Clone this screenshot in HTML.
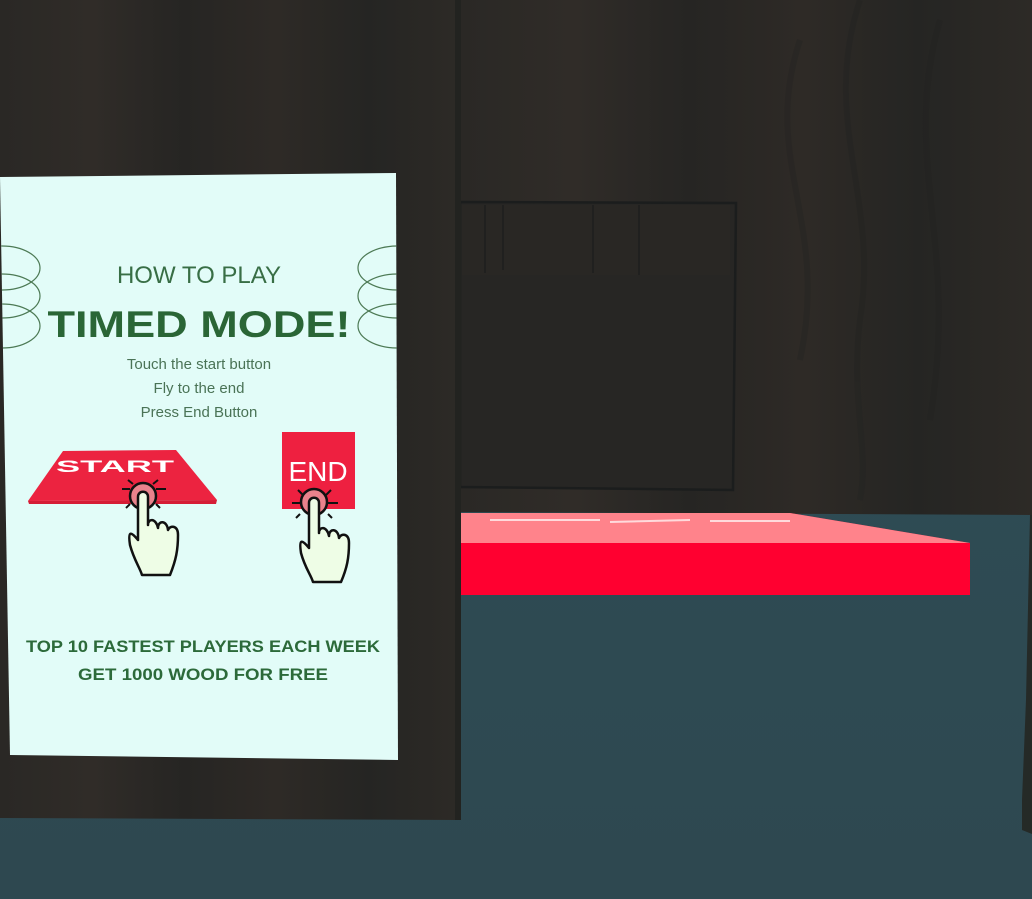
<!DOCTYPE html>
<html><head><meta charset="utf-8"><style>
html,body{margin:0;padding:0;width:1032px;height:899px;overflow:hidden;background:#2f4c55}
svg{display:block}
text{font-family:"Liberation Sans",sans-serif}
</style></head><body>
<svg width="1032" height="899" viewBox="0 0 1032 899" xmlns="http://www.w3.org/2000/svg">
<defs>
<linearGradient id="floor" x1="0" y1="0" x2="0" y2="1"><stop offset="0" stop-color="#2f4f58"/><stop offset="1" stop-color="#2e4850"/></linearGradient>
<linearGradient id="wood" x1="0" y1="0" x2="1" y2="0">
<stop offset="0" stop-color="#2a2825"/><stop offset="0.2" stop-color="#302c28"/><stop offset="0.4" stop-color="#262523"/><stop offset="0.6" stop-color="#2e2a26"/><stop offset="0.8" stop-color="#252523"/><stop offset="1" stop-color="#2d2a26"/></linearGradient>
<clipPath id="pc"><polygon points="0,177 396,173 398,760 10,755"/></clipPath>
</defs>
<rect width="1032" height="899" fill="url(#floor)"/>
<!-- back wall -->
<polygon points="460,0 1032,0 1032,515 460,512" fill="url(#wood)"/>
<g stroke="#1e2020" stroke-width="6" fill="none" opacity="0.25">
<path d="M860 0 C820 120 880 200 860 320 C850 400 870 450 860 500"/>
<path d="M800 40 C760 160 830 220 800 360"/>
<path d="M940 20 C900 160 960 240 930 420"/>
<path d="M580 300 C560 380 600 420 590 480"/>
</g>
<!-- panel on wall -->
<polygon points="460,202 736,203 733,490 460,487" fill="#272624" stroke="#1b1d1d" stroke-width="2.5"/>
<rect x="462" y="205" width="268" height="70" fill="#292724"/>
<g stroke="#1b1d1d" stroke-width="1.5" opacity="0.8"><line x1="485" y1="205" x2="485" y2="273"/><line x1="503" y1="205" x2="503" y2="270"/><line x1="593" y1="205" x2="593" y2="273"/><line x1="639" y1="205" x2="639" y2="275"/></g>
<!-- right dark strip -->
<polygon points="1030,515 1032,515 1032,834 1022,830 1022,800 1026,700" fill="#252a27"/>
<!-- red slab -->
<polygon points="460,513 790,513 970,543 970,595 460,595" fill="#ff0030"/>
<polygon points="460,513 790,513 970,543 460,543" fill="#ff838b"/>
<g stroke="#fff" stroke-width="2" opacity="0.7"><line x1="490" y1="520" x2="600" y2="520"/><line x1="610" y1="522" x2="690" y2="520"/><line x1="710" y1="521" x2="790" y2="521"/></g>
<!-- pillar -->
<polygon points="0,0 460,0 460,820 0,818" fill="url(#wood)"/>
<rect x="455" y="0" width="6" height="820" fill="#222320"/>
<!-- poster -->
<polygon points="0,177 396,173 398,760 10,755" fill="#e2fcf8"/>
<g stroke="#4d7a55" stroke-width="1.2" fill="none" clip-path="url(#pc)">
<ellipse cx="2" cy="268" rx="38" ry="22"/><ellipse cx="2" cy="296" rx="38" ry="22"/><ellipse cx="2" cy="326" rx="38" ry="22"/>
<ellipse cx="398" cy="268" rx="40" ry="22"/><ellipse cx="398" cy="296" rx="40" ry="22"/><ellipse cx="398" cy="326" rx="40" ry="22"/>
</g>
<text x="199" y="283" font-size="24" text-anchor="middle" fill="#386e45">HOW TO PLAY</text>
<text x="199" y="337" font-size="37" font-weight="bold" text-anchor="middle" fill="#2a6636" textLength="303" lengthAdjust="spacingAndGlyphs">TIMED MODE!</text>
<g font-size="15" fill="#4a7356" text-anchor="middle">
<text x="199" y="369">Touch the start button</text>
<text x="199" y="393">Fly to the end</text>
<text x="199" y="417">Press End Button</text>
</g>
<!-- START button -->
<polygon points="63,451 176,450 217,500 28,501" fill="#ec2340"/>
<polygon points="28,501 217,500 216,504 29,504" fill="#d51d36"/>
<text x="115" y="472" font-size="17" font-weight="bold" fill="#fff" text-anchor="middle" textLength="118" lengthAdjust="spacingAndGlyphs">START</text>
<!-- END button -->
<rect x="282" y="432" width="73" height="77" fill="#ee2040"/>
<text x="318" y="481" font-size="28" fill="#fff" text-anchor="middle">END</text>
<!-- hands -->
<g stroke="#111" stroke-width="2.5" fill="#eefde6" stroke-linejoin="round">
<circle cx="143" cy="496" r="13" fill="#e9828c"/>
<path d="M138 497 L138 540 C130 530 128 532 130 545 C134 560 140 568 142 575 L170 575 C176 560 178 550 178 535 C178 525 170 525 168 530 C167 520 158 520 158 528 C156 518 148 518 148 525 L148 497 C148 490 138 490 138 497 Z"/>
<circle cx="314" cy="502" r="13" fill="#e9828c"/>
<path d="M309 503 L309 548 C301 538 299 540 301 553 C305 568 311 575 313 582 L341 582 C347 568 349 558 349 543 C349 533 341 533 339 538 C338 528 329 528 329 536 C327 526 319 526 319 533 L319 503 C319 496 309 496 309 503 Z"/>
</g>
<g stroke="#111" stroke-width="2">
<line x1="122" y1="489" x2="130" y2="489"/><line x1="156" y1="489" x2="166" y2="489"/><line x1="128" y1="480" x2="133" y2="484"/><line x1="158" y1="480" x2="153" y2="484"/><line x1="126" y1="508" x2="130" y2="504"/><line x1="160" y1="508" x2="156" y2="504"/>
<line x1="292" y1="503" x2="300" y2="503"/><line x1="328" y1="503" x2="338" y2="503"/><line x1="298" y1="490" x2="303" y2="495"/><line x1="331" y1="490" x2="326" y2="495"/><line x1="296" y1="518" x2="300" y2="514"/><line x1="332" y1="518" x2="328" y2="514"/>
</g>
<g font-size="17" font-weight="bold" fill="#2c6a3a" text-anchor="middle">
<text x="203" y="652" textLength="354" lengthAdjust="spacingAndGlyphs">TOP 10 FASTEST PLAYERS EACH WEEK</text>
<text x="203" y="680" textLength="250" lengthAdjust="spacingAndGlyphs">GET 1000 WOOD FOR FREE</text>
</g>
</svg>
</body></html>
